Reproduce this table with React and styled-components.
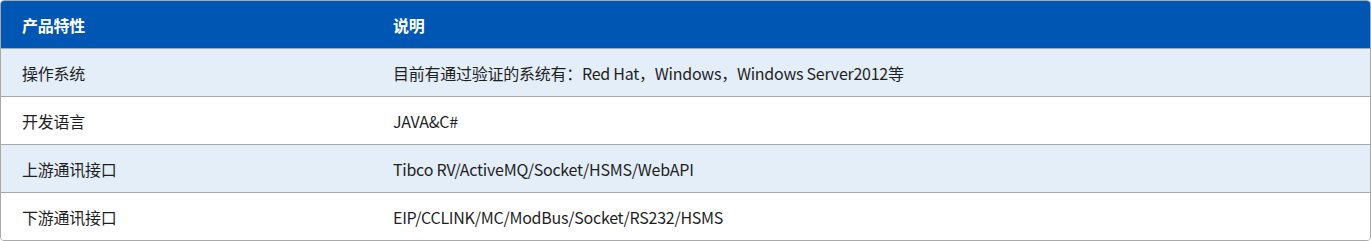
import React from "react";
import styled, { createGlobalStyle } from "styled-components";

const Global = createGlobalStyle`
  html, body { margin: 0; padding: 0; background: #fff; }
  body { font-family: "Noto Sans CJK SC", "Noto Sans", sans-serif; }
`;

const Table = styled.div`
  width: 1371px;
  box-sizing: border-box;
  border: 1px solid #a9a9a9;
  border-radius: 4px;
  overflow: hidden;
`;

const Row = styled.div`
  display: grid;
  grid-template-columns: 370px 1fr;
  height: 47px;
  align-items: center;
  background: ${(p) => (p.$head ? "#0057b3" : p.$alt ? "#e4eef8" : "#ffffff")};
  color: ${(p) => (p.$head ? "#ffffff" : "#1f1f1f")};
  font-weight: ${(p) => (p.$head ? 700 : 400)};
  font-size: 16px;
  letter-spacing: -0.25px;
  border-bottom: 1px solid #a9a9a9;
  &:last-child { border-bottom: none; }
`;

const Cell = styled.div`
  padding-left: ${(p) => (p.$first ? "21px" : "22px")};
  white-space: nowrap;
`;

const data = [
  ["操作系统", "目前有通过验证的系统有：Red Hat，Windows，Windows Server2012等"],
  ["开发语言", "JAVA&C#"],
  ["上游通讯接口", "Tibco RV/ActiveMQ/Socket/HSMS/WebAPI"],
  ["下游通讯接口", "EIP/CCLINK/MC/ModBus/Socket/RS232/HSMS"],
];

export default function App() {
  return (
    <>
      <Global />
      <Table>
        <Row $head>
          <Cell $first>产品特性</Cell>
          <Cell>说明</Cell>
        </Row>
        {data.map(([a, b], i) => (
          <Row key={a} $alt={i % 2 === 0}>
            <Cell $first>{a}</Cell>
            <Cell>{b}</Cell>
          </Row>
        ))}
      </Table>
    </>
  );
}
